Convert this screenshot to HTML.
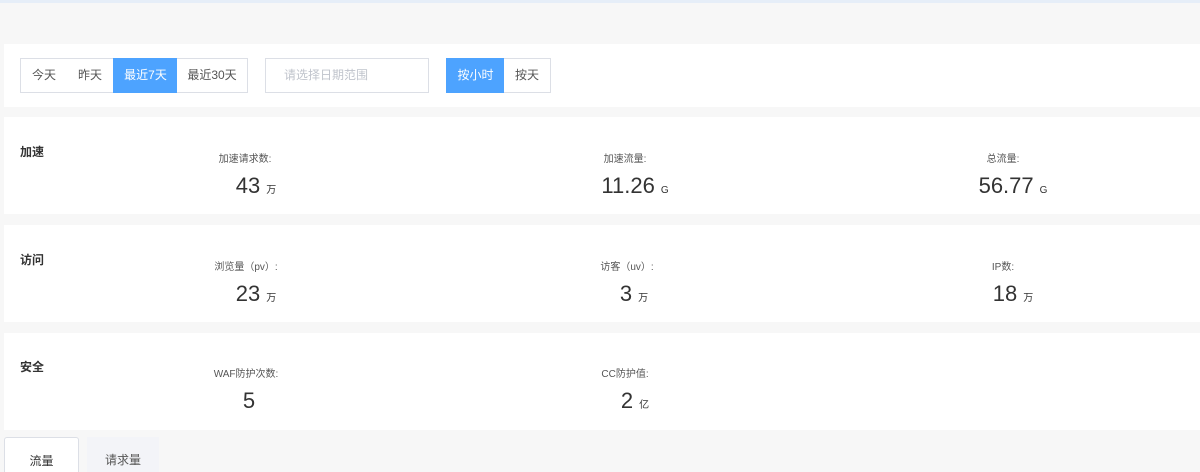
<!DOCTYPE html>
<html><head><meta charset="utf-8"><style>
*{box-sizing:border-box;margin:0;padding:0}
html,body{width:1200px;height:472px;overflow:hidden}
body{background:#f7f7f7;font-family:"Liberation Sans","Noto Sans CJK SC",sans-serif;color:#333;position:relative}
.top{position:absolute;left:0;top:0;width:1200px;height:3px;background:#e6eef8}
.card{position:absolute;left:4px;width:1196px;background:#fff}
.btn{position:absolute;top:58px;height:35px;line-height:33px;font-size:12px;text-align:center;border:1px solid #dcdfe6;color:#555;background:#fff}
.blue{background:#4da3ff;color:#fff;border-color:#4da3ff}
.sec{position:absolute;left:20px;font-size:12px;font-weight:bold;color:#333}
.lbl{position:absolute;font-size:10px;color:#555;transform:translateX(-50%);white-space:nowrap}
.val{position:absolute;font-size:22px;color:#333;white-space:nowrap;transform:translateX(-50%)}
.val small{font-size:10px;margin-left:6px}
</style></head><body>
<div class="top"></div>
<div class="card" style="top:44px;height:63px"></div>
<div class="btn" style="left:20px;width:47px;border-right:none">今天</div>
<div class="btn" style="left:66px;width:48px;border-left:none;border-right:none">昨天</div>
<div class="btn blue" style="left:113px;width:65px">最近7天</div>
<div class="btn" style="left:177px;width:71px;border-left:none">最近30天</div>
<div class="btn" style="left:265px;width:164px;text-align:left;padding-left:18px;color:#c0c4cc">请选择日期范围</div>
<div class="btn blue" style="left:446px;width:59px">按小时</div>
<div class="btn" style="left:504px;width:47px;border-left:none">按天</div>

<div class="card" style="top:117px;height:97px"></div>
<div class="sec" style="top:143px">加速</div>
<div class="lbl" style="left:245px;top:150px">加速请求数:</div>
<div class="val" style="left:256px;top:173px">43<small>万</small></div>
<div class="lbl" style="left:625px;top:150px">加速流量:</div>
<div class="val" style="left:635px;top:173px">11.26<small>G</small></div>
<div class="lbl" style="left:1003px;top:150px">总流量:</div>
<div class="val" style="left:1013px;top:173px">56.77<small>G</small></div>

<div class="card" style="top:225px;height:97px"></div>
<div class="sec" style="top:251px">访问</div>
<div class="lbl" style="left:246px;top:258px">浏览量（pv）:</div>
<div class="val" style="left:256px;top:281px">23<small>万</small></div>
<div class="lbl" style="left:627px;top:258px">访客（uv）:</div>
<div class="val" style="left:634px;top:281px">3<small>万</small></div>
<div class="lbl" style="left:1003px;top:258px">IP数:</div>
<div class="val" style="left:1013px;top:281px">18<small>万</small></div>

<div class="card" style="top:333px;height:97px"></div>
<div class="sec" style="top:358px">安全</div>
<div class="lbl" style="left:246px;top:365px">WAF防护次数:</div>
<div class="val" style="left:249px;top:388px">5</div>
<div class="lbl" style="left:625px;top:365px">CC防护值:</div>
<div class="val" style="left:635px;top:388px">2<small>亿</small></div>

<div style="position:absolute;left:4px;top:437px;width:75px;height:35px;background:#fff;border:1px solid #dcdfe6;border-bottom:none;border-radius:3px 3px 0 0;font-size:12px;text-align:center;line-height:46px">流量</div>
<div style="position:absolute;left:87px;top:437px;width:72px;height:35px;background:#f3f4f8;font-size:12px;text-align:center;line-height:46px;color:#555">请求量</div>
</body></html>
